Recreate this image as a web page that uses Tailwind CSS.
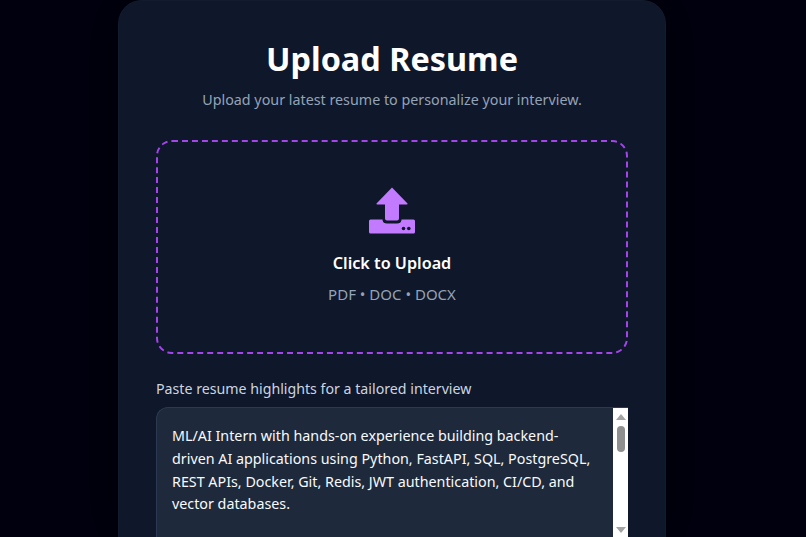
<!DOCTYPE html>
<html lang="en">
<head>
  <meta charset="UTF-8" />
  <meta name="viewport" content="width=device-width, initial-scale=1.0" />
  <title>Upload Resume</title>
  <script src="https://cdn.jsdelivr.net/npm/@tailwindcss/browser@4"></script>
</head>
<body class="h-[537px] overflow-hidden bg-[#00000f] font-['Noto_Sans','Open_Sans',sans-serif]">

  <main class="ml-[118px] w-[548px] h-[537px] overflow-hidden rounded-t-[24px] border border-b-0 border-[#131c2e] bg-[#0f172a] px-[37px] pt-[35px] shadow-[0_0_50px_rgba(0,0,0,0.6)]">

    <h1 class="text-center text-[32.400px] leading-[44px] font-bold text-white">Upload Resume</h1>
    <p class="mt-[8px] text-center text-[14.300px] leading-[24px] text-[#94a3b8]">Upload your latest resume to personalize your interview.</p>

    <!-- upload box -->
    <div class="mt-[28px] h-[214px] rounded-[16px] border-2 border-dashed border-[#a445ec] flex flex-col items-center pt-[45px]">
      <svg class="w-[46px] h-[47px]" viewBox="0 0 46 46" fill="#c27aff">
        <path d="M23 0 L38.500 16 Q39 17 37.500 17 L30 17 L30 31 Q30 33 28 33 L18 33 Q16 33 16 31 L16 17 L8.500 17 Q7 17 7.500 16 Z" />
        <path d="M1.500 32 L13.500 32 L13.500 32.500 Q14 36 18 36 L28 36 Q32 36 32.500 32.500 L32.500 32 L44.500 32 Q46 32 46 33.500 L46 44.500 Q46 46 44.500 46 L1.500 46 Q0 46 0 44.500 L0 33.500 Q0 32 1.500 32 Z" />
        <circle cx="34.500" cy="41" r="1.800" fill="#0f172a" />
        <circle cx="39.800" cy="41" r="1.800" fill="#0f172a" />
      </svg>
      <p class="mt-[17px] text-[16.200px] leading-[24px] font-semibold text-white">Click to Upload</p>
      <p class="mt-[7px] text-[15px] leading-[24px] text-[#94a3b8]">PDF • DOC • DOCX</p>
    </div>

    <label class="block mt-[23px] text-[14.200px] leading-[24px] text-[#cbd5e1]">Paste resume highlights for a tailored interview</label>

    <!-- textarea with native looking scrollbar -->
    <div class="mt-[6px] h-[160px] flex rounded-tl-[12px] border-t border-l border-[#2b3a50] bg-[#1e293b]">
      <div class="flex-1 pl-[15px] pr-[16px] pt-[17px] text-[14.300px] leading-[22.750px] text-[#f8fafc]">ML/AI Intern with hands-on experience building backend-driven AI applications using Python, FastAPI, SQL, PostgreSQL, REST APIs, Docker, Git, Redis, JWT authentication, CI/CD, and vector databases.</div>
      <div class="w-[15px] bg-white flex flex-col items-center pt-[6px]">
        <div class="w-0 h-0 border-x-[5px] border-x-transparent border-b-[6px] border-b-[#a3a3a3]"></div>
        <div class="mt-[6px] w-[8px] h-[26px] rounded-full bg-[#8f8f8f]"></div>
        <div class="mt-[75px] w-0 h-0 border-x-[5px] border-x-transparent border-t-[6px] border-t-[#a3a3a3]"></div>
      </div>
    </div>
  </main>

</body>
</html>
